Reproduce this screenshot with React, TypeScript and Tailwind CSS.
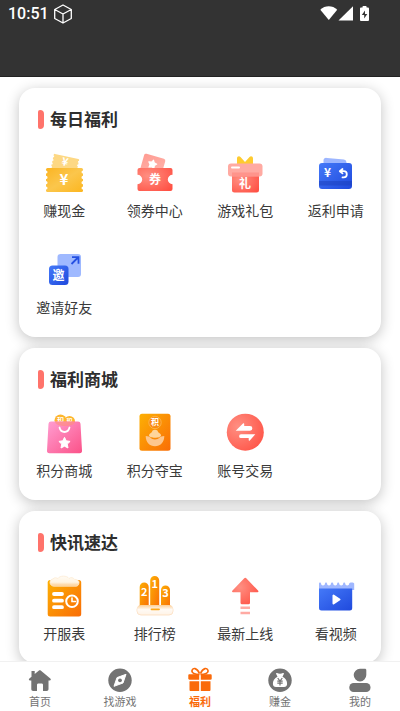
import { useState } from "react";
import type { ReactNode } from "react";

type Entry = { name: string; icon: ReactNode };

const GLYPH_FONT = "'Noto Sans CJK SC', sans-serif";

// x and y are the middle of the character
function Glyph({ x, y, size, children }: { x: number; y: number; size: number; children: string }) {
  return (
    <text
      x={x}
      y={y + size * 0.37}
      fontSize={size}
      fontWeight={700}
      fontFamily={GLYPH_FONT}
      fill="#fff"
      textAnchor="middle"
    >
      {children}
    </text>
  );
}

function Icon({ children }: { children: ReactNode }) {
  return (
    <svg viewBox="0 0 44 44" className="h-11 w-11" aria-hidden="true">
      {children}
    </svg>
  );
}

// Gradients shared by all the tiles
function Gradients() {
  return (
    <svg className="absolute h-0 w-0" aria-hidden="true">
      <defs>
        <linearGradient id="gold" x1="0" y1="0" x2="1" y2="1">
          <stop offset="0" stopColor="#fbb422" />
          <stop offset="0.5" stopColor="#fbc64c" />
          <stop offset="1" stopColor="#fcb61f" />
        </linearGradient>
        <radialGradient id="red" cx="0.3" cy="0.35" r="0.85">
          <stop offset="0" stopColor="#ff8f82" />
          <stop offset="1" stopColor="#ff5144" />
        </radialGradient>
        <linearGradient id="pinkRed" x1="0" y1="0" x2="1" y2="1">
          <stop offset="0" stopColor="#ff9c92" />
          <stop offset="1" stopColor="#ffb5ae" />
        </linearGradient>
        <linearGradient id="blue" x1="0" y1="0" x2="1" y2="1">
          <stop offset="0" stopColor="#4479f8" />
          <stop offset="1" stopColor="#1f49dd" />
        </linearGradient>
        <linearGradient id="pink" x1="0" y1="0" x2="1" y2="1">
          <stop offset="0" stopColor="#ff9ed2" />
          <stop offset="1" stopColor="#fb5288" />
        </linearGradient>
        <linearGradient id="orange" x1="0" y1="0" x2="1" y2="1">
          <stop offset="0" stopColor="#fdb004" />
          <stop offset="1" stopColor="#f96d06" />
        </linearGradient>
        <linearGradient id="cloud" x1="0" y1="0" x2="0" y2="1">
          <stop offset="0" stopColor="#fffbf4" />
          <stop offset="0.6" stopColor="#fff4e2" />
          <stop offset="1" stopColor="#fdc987" />
        </linearGradient>
        <linearGradient id="base" x1="0" y1="0" x2="0" y2="1">
          <stop offset="0" stopColor="#fdcf96" />
          <stop offset="0.5" stopColor="#fffaf4" />
          <stop offset="1" stopColor="#fff4e8" />
        </linearGradient>
      </defs>
    </svg>
  );
}

const daily: Entry[] = [
  {
    name: "赚现金",
    icon: (
      <Icon>
        <g transform="rotate(12 22 12)">
          <rect x="10" y="4" width="26" height="18" rx="1" fill="#fdd884" />
          <path d="M10 6v14M36 6v14" stroke="#fff" strokeWidth="1.6" strokeDasharray="1.6 2" />
          <Glyph x={22.5} y={9.5} size={11}>¥</Glyph>
        </g>
        <rect x="4" y="16" width="37" height="24" rx="1.5" fill="url(#gold)" />
        <path d="M4 20v18M41 20v18" stroke="#fff" strokeWidth="3" strokeLinecap="round" strokeDasharray="0.1 5.2" />
        <Glyph x={22} y={27.5} size={15}>¥</Glyph>
      </Icon>
    ),
  },
  {
    name: "领券中心",
    icon: (
      <Icon>
        <g transform="rotate(16 20 12)">
          <rect x="9" y="4" width="22" height="18" rx="2" fill="url(#pinkRed)" />
          <path
            d="m19.500 8 1.400 2.500 2.800.6-1.900 2.100.3 2.900-2.600-1.200-2.600 1.200.3-2.900-1.900-2.100 2.800-.6z"
            fill="#fff"
            stroke="#fff"
            strokeWidth="1"
            strokeLinejoin="round"
          />
        </g>
        <path
          d="M6.500 16h31a2 2 0 0 1 2 2v4.800a4.500 4.500 0 0 0 0 9.400v4.800a2 2 0 0 1-2 2h-31a2 2 0 0 1-2-2v-4.800a4.500 4.500 0 0 0 0-9.400v-4.800a2 2 0 0 1 2-2z"
          fill="url(#red)"
        />
        <Glyph x={22} y={27.5} size={12}>券</Glyph>
      </Icon>
    ),
  },
  {
    name: "游戏礼包",
    icon: (
      <Icon>
        <path d="M14 12V6.500c0-2 2-3 3.500-1.500l4.500 5 4.500-5C28 3.500 30 4.500 30 6.500V12z" fill="#fecb30" />
        <path d="M9 21h27v17a2.500 2.500 0 0 1-2.500 2.500h-22A2.500 2.500 0 0 1 9 38z" fill="url(#red)" />
        <rect x="5" y="11.500" width="34.500" height="13" rx="3" fill="#ffaaa2" />
        <path d="M9 20.500h27v4H9z" fill="#ff8278" opacity="0.55" />
        <path d="M9 15.500h7" stroke="#fff" strokeWidth="2" strokeLinecap="round" />
        <Glyph x={22} y={31.500} size={12}>礼</Glyph>
      </Icon>
    ),
  },
  {
    name: "返利申请",
    icon: (
      <Icon>
        <path d="m13 6 17 1.500a3 3 0 0 1 2.500 3V15H9.500V8.500A2.500 2.500 0 0 1 13 6z" fill="#9db6ff" />
        <rect x="5" y="11" width="33" height="26" rx="3" fill="url(#blue)" />
        <path d="M5 29h33v4.500H5z" fill="#1a3db9" opacity="0.5" />
        <Glyph x={13.500} y={21} size={12}>¥</Glyph>
        <path
          d="m28.500 17-2.700 2.200 2.700 2.200M26 19.200h3.700a3 3 0 0 1 0 6.200h-1.200"
          fill="none"
          stroke="#fff"
          strokeWidth="1.800"
          strokeLinecap="round"
          strokeLinejoin="round"
        />
      </Icon>
    ),
  },
  {
    name: "邀请好友",
    icon: (
      <Icon>
        <rect x="15.500" y="5" width="23.500" height="23" rx="3" fill="#9fb9ff" />
        <path d="m29.500 15 6.500-6.500M30 8.200h6.500v6.500" fill="none" stroke="#2450e2" strokeWidth="1.800" />
        <rect x="7" y="16.500" width="19.500" height="19.500" rx="3.500" fill="url(#blue)" />
        <Glyph x={16.500} y={26.500} size={12}>邀</Glyph>
      </Icon>
    ),
  },
];

const mall: Entry[] = [
  {
    name: "积分商城",
    icon: (
      <Icon>
        <circle cx="18.500" cy="8.500" r="6" fill="#fdb62d" />
        <circle cx="27.500" cy="9.500" r="5.500" fill="#fdb62d" />
        <Glyph x={18.500} y={8} size={7}>积</Glyph>
        <Glyph x={27.500} y={9} size={6}>积</Glyph>
        <path d="M9 9.500h27a2.500 2.500 0 0 1 2.500 2.300L40 38.500a2.500 2.500 0 0 1-2.500 2.700h-30A2.500 2.500 0 0 1 5 38.500l1.500-26.700A2.500 2.500 0 0 1 9 9.500z" fill="url(#pink)" />
        <path d="M13 9.500h20c0 6-20 6-20 0z" fill="#fd8f7a" opacity="0.6" />
        <path d="M17.500 15.500c1.500 6 8.500 6 10 0" fill="none" stroke="#fff" strokeWidth="1.800" strokeLinecap="round" />
        <path
          d="m22.500 25.300 1.700 3.500 3.900.6-2.800 2.700.7 3.900-3.500-1.800-3.500 1.800.7-3.900-2.800-2.700 3.900-.6z"
          fill="#fff"
          stroke="#fff"
          strokeWidth="1"
          strokeLinejoin="round"
        />
      </Icon>
    ),
  },
  {
    name: "积分夺宝",
    icon: (
      <Icon>
        <rect x="6.500" y="1.700" width="31" height="37" rx="2.500" fill="url(#orange)" />
        <circle cx="22" cy="10.500" r="6.200" fill="#f98a10" stroke="#fdbb55" strokeWidth="0.800" />
        <Glyph x={22} y={10.500} size={8}>积</Glyph>
        <path d="M16 23.500c0-2 2-2.500 3-3.500 0-3 6-3 6 0 1 1 3 1.500 3 3.500 0 3-12 3-12 0z" fill="#fed59c" />
        <path d="M12.700 24c5 0 5 3.500 9.300 3.500s4.300-3.500 9.300-3.500c0 6.500-4 10.200-9.300 10.200S12.700 30.500 12.700 24z" fill="#fdc68d" />
      </Icon>
    ),
  },
  {
    name: "账号交易",
    icon: (
      <Icon>
        <circle cx="22.300" cy="20.200" r="18.500" fill="url(#red)" />
        <path d="m12.700 18.700 7.300-7.200c.6-.5 1.200-.2 1.200.5v2h5.800a2.300 2.300 0 0 1 0 4.700z" fill="#fff" />
        <path d="m32.300 22.300-5.500 6.200c-.6.600-1.100.3-1.100-.4v-2H18a1.900 1.900 0 0 1 0-3.800z" fill="#fff" />
      </Icon>
    ),
  },
];

const news: Entry[] = [
  {
    name: "开服表",
    icon: (
      <Icon>
        <rect x="5.700" y="5" width="33.500" height="36.500" rx="2.500" fill="url(#orange)" />
        <path
          d="M11 4c1-2 4-1 5-.5C17.500.5 25 .2 27 3.500c2-1.500 4-1 5.500.8 3 0 4.500 1.700 4.500 3.200 0 2.500-1.500 3.700-3 3.700H12c-2 0-4-1.500-4-3.700S9.500 4 11 4z"
          fill="url(#cloud)"
          stroke="#fdebd3"
          strokeWidth="0.800"
        />
        <path d="M12 19h8M12 25.700h8M12 32.200h8" stroke="#fff" strokeWidth="3.800" strokeLinecap="round" />
        <circle cx="30" cy="26.300" r="5.800" fill="none" stroke="#fff" strokeWidth="2" />
        <path d="M30 23v3.500h3.500" fill="none" stroke="#fff" strokeWidth="1.600" strokeLinecap="round" />
      </Icon>
    ),
  },
  {
    name: "排行榜",
    icon: (
      <Icon>
        <rect x="4" y="30.500" width="36" height="9.500" rx="4" fill="#fff1e2" stroke="#fde3c9" />
        <path d="M6.700 34V12a4.500 4.500 0 0 1 9 0v22z" fill="url(#orange)" />
        <path d="M17.200 34V5.500a4.500 4.500 0 0 1 9 0V34z" fill="url(#orange)" />
        <path d="M28 34V15a4.500 4.500 0 0 1 9 0v19z" fill="url(#orange)" />
        <rect x="4.500" y="30" width="35" height="9" rx="3.500" fill="url(#base)" />
        <path d="M18.500 34.300h7.500" stroke="#fda81b" strokeWidth="1.800" strokeLinecap="round" />
        <Glyph x={11.200} y={16.500} size={11}>2</Glyph>
        <Glyph x={21.700} y={9} size={11}>1</Glyph>
        <Glyph x={32.500} y={17.500} size={11}>3</Glyph>
      </Icon>
    ),
  },
  {
    name: "最新上线",
    icon: (
      <Icon>
        <path
          d="m21 3.500-11.500 12c-.8.900-.5 1.700.5 1.700h7.500v10.600a1.500 1.500 0 0 0 1.500 1.500h6.500a1.500 1.500 0 0 0 1.500-1.500V17.200h7.500c1 0 1.300-.8.500-1.700L23.500 3.500a1.700 1.700 0 0 0-2.500 0z"
          fill="url(#red)"
        />
        <path d="M17.500 32.700H27M17.500 38H27" stroke="#ffaaa3" strokeWidth="2.400" />
      </Icon>
    ),
  },
  {
    name: "看视频",
    icon: (
      <Icon>
        <path
          d="M5 15V8.500c0-1.500 2-1.500 2 0a2 2 0 0 0 4 0c0-1.500 2-1.500 2 0a2 2 0 0 0 4 0c0-1.500 2.200-1.500 2.200 0a2 2 0 0 0 4 0c0-1.500 2-1.500 2 0a2 2 0 0 0 4 0c0-1.500 2-1.500 2 0a2 2 0 0 0 4 0c0-1.500 5-1.500 5 0V15z"
          fill="#9fb7ff"
        />
        <path d="M5 13.500h33.200V33a2.500 2.500 0 0 1-2.500 2.500H7.500A2.500 2.500 0 0 1 5 33z" fill="url(#blue)" />
        <path d="M19.500 20.500v8l6-4z" fill="#fff" stroke="#fff" strokeWidth="2" strokeLinejoin="round" />
      </Icon>
    ),
  },
];

const sections = [
  { title: "每日福利", entries: daily },
  { title: "福利商城", entries: mall },
  { title: "快讯速达", entries: news },
];

const tabs: Entry[] = [
  {
    name: "首页",
    icon: (
      <path
        fill="currentColor"
        d="M3.500 3h3.200v3L11 2.500c.6-.5 1.100-.5 1.700 0l9.600 8c1 .9.600 2-.6 2h-1.200V21c0 1.200-.6 1.900-1.900 1.900H15V17c0-1-.5-1.500-1.500-1.500h-3C9.500 15.500 9 16 9 17v5.900H5.200c-1.300 0-1.900-.7-1.900-1.900v-8.500H2c-1.200 0-1.600-1.100-.6-2l2.100-1.800z"
      />
    ),
  },
  {
    name: "找游戏",
    icon: (
      <>
        <circle cx="12" cy="12.300" r="11.700" fill="currentColor" />
        <path d="M18 6.300 15 15l-9 3.300L9 9.600z" fill="#fff" stroke="#fff" strokeLinejoin="round" />
        <circle cx="12" cy="12.300" r="1.900" fill="currentColor" />
      </>
    ),
  },
  {
    name: "福利",
    icon: (
      <>
        <path
          d="M11.500 6.500C7 6.500 3.500 5 4 2.500 4.700-.5 9-.5 11.500 5.500M12.500 6.500c4.500 0 8-1.500 7.500-4-.7-3-5-3-7.500 3"
          fill="none"
          stroke="currentColor"
          strokeWidth="1.600"
        />
        <path
          fill="currentColor"
          d="M1.500 6.300h9.700v5.500H1.500c-.8 0-1.200-.4-1.200-1.200V7.500c0-.8.400-1.200 1.200-1.200zM12.800 6.300h9.700c.8 0 1.200.4 1.200 1.200v3.100c0 .8-.4 1.200-1.200 1.200h-9.700zM1.500 13.300h9.700V23H2.700c-.8 0-1.200-.4-1.200-1.200zM12.800 13.300h9.700v8.500c0 .8-.4 1.200-1.200 1.200h-8.500z"
        />
      </>
    ),
  },
  {
    name: "赚金",
    icon: (
      <>
        <circle cx="12" cy="12.300" r="11.700" fill="currentColor" />
        <path
          d="M8.300 6.200c-.5-.8 0-1.200.8-1.100.9.200 1.700.6 2.900.6s2-.4 2.900-.6c.8-.1 1.300.3.800 1.100l-1.200 2.500c3 1.500 4.800 4.200 4.600 7.300-.1 2.100-1.200 3-3.100 3H8c-1.900 0-3-.9-3.100-3-.2-3.100 1.600-5.800 4.600-7.300z"
          fill="#fff"
        />
        <path
          d="m9.700 10 2.300 3 2.300-3M9.300 13.200h5.400M9.300 15.200h5.400M12 13v4.500"
          fill="none"
          stroke="currentColor"
          strokeWidth="1.200"
        />
      </>
    ),
  },
  {
    name: "我的",
    icon: (
      <>
        <path
          fill="currentColor"
          d="M12 .8h4.800c1 0 1.500.5 1.500 1.500v4.800a6.300 6.300 0 1 1-6.300-6.300z"
        />
        <rect x="1.300" y="15" width="21.200" height="9" rx="4.300" fill="currentColor" />
      </>
    ),
  },
];

function StatusBar() {
  return (
    <div className="flex h-7 items-center pl-2 pr-7 text-white">
      <span className="font-[Roboto,sans-serif] text-base font-medium leading-5">10:51</span>
      <svg viewBox="0 0 20 20" className="ml-1 h-5 w-5" fill="none" stroke="currentColor" strokeWidth="1.300" strokeLinejoin="round" aria-hidden="true">
        <path d="M10 1 18.300 5.500v9L10 19l-8.300-4.500v-9zM1.700 5.500 10 10l8.300-4.500M10 10v9" />
      </svg>
      <svg viewBox="0 0 52 16" className="ml-auto h-4 w-[52px]" fill="currentColor" aria-hidden="true">
        <path d="M.3 3.700C5-.9 12.500-.9 17.200 3.700L8.800 14z" />
        <path d="M33 .2V14.500H18.500z" />
        <path d="M42.500.8c0-.5.300-.8.800-.8h2.500c.5 0 .8.300.8.800v.7h1.100c.8 0 1.300.5 1.300 1.300v10.900c0 .8-.5 1.300-1.300 1.300h-6.400c-.8 0-1.300-.5-1.300-1.300V2.800c0-.8.500-1.300 1.300-1.300h1.200z" />
        <path d="M45 4.500 41.800 9h2.400v3.500L47.300 8H45z" fill="#333" />
      </svg>
    </div>
  );
}

function Section({ title, entries }: { title: string; entries: Entry[] }) {
  return (
    <section className="rounded-2xl bg-white shadow-[0_3px_14px_rgba(0,0,0,0.24)]">
      <div className="flex h-[54px] items-center gap-1.5 px-[19px] pt-2">
        <span className="h-[19px] w-1.5 rounded-l-xs rounded-r-sm bg-[#ff736b]" />
        <h2 className="text-[17px] font-bold leading-6 text-[#2e2e2e]">{title}</h2>
      </div>
      <div className="grid grid-cols-4 pb-px">
        {entries.map((entry) => (
          <button key={entry.name} type="button" className="flex h-[97px] flex-col items-center gap-1 pt-2.5">
            {entry.icon}
            <span className="text-sm leading-5 text-[#3a3a3a]">{entry.name}</span>
          </button>
        ))}
      </div>
    </section>
  );
}

export default function App() {
  const [active, setActive] = useState("福利");

  return (
    <div className="flex h-screen flex-col bg-white font-['Noto_Sans_CJK_SC',sans-serif]">
      <Gradients />
      <header className="h-[77px] shrink-0 border-b border-[#222] bg-[#333]">
        <StatusBar />
      </header>

      <main className="flex min-h-0 flex-1 flex-col gap-[11px] overflow-y-auto px-[19px] pb-4 pt-[11px] [scrollbar-width:none]">
        {sections.map((section) => (
          <Section key={section.title} {...section} />
        ))}
      </main>

      <nav className="grid h-[50px] shrink-0 grid-cols-5 border-t border-[#f1f1f1] bg-white">
        {tabs.map((tab) => (
          <button
            key={tab.name}
            type="button"
            onClick={() => setActive(tab.name)}
            className={`flex flex-col items-center gap-0.5 pt-1.5 ${
              active === tab.name ? "font-bold text-[#fa6a0a]" : "text-[#737373]"
            }`}
          >
            <svg viewBox="0 0 24 24" className="h-6 w-6 overflow-visible" aria-hidden="true">
              {tab.icon}
            </svg>
            <span className="text-[11px] leading-[14px]">{tab.name}</span>
          </button>
        ))}
      </nav>
    </div>
  );
}
